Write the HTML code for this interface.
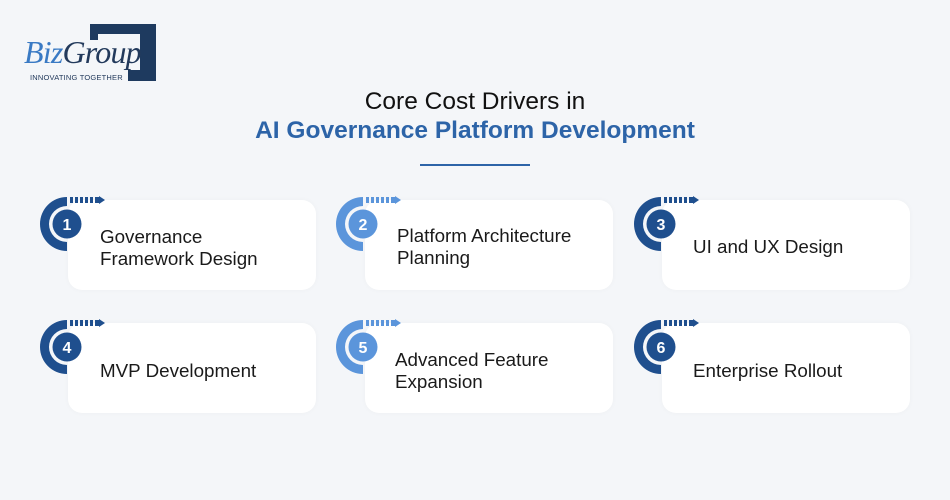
<!DOCTYPE html>
<html><head><meta charset="utf-8"><style>
*{margin:0;padding:0;box-sizing:border-box}
body{width:950px;height:500px;background:#f4f6f9;position:relative;overflow:hidden;font-family:"Liberation Sans",sans-serif}
.card{position:absolute;width:248px;height:90px;background:#fff;border-radius:14px;box-shadow:0 0 6px rgba(0,0,0,0.03)}
.t{position:absolute;font-size:18.8px;line-height:22px;color:#1a1a1a}
svg.b{position:absolute;overflow:visible}
.h1{position:absolute;top:88px;width:950px;text-align:center;font-size:24.5px;color:#111}
.h2{position:absolute;top:117px;width:950px;text-align:center;font-size:24.5px;font-weight:bold;color:#2d64a8}
</style></head><body>
<!-- logo -->
<div style="position:absolute;left:90px;top:24px;width:66px;height:10px;background:#1e3a5f"></div>
<div style="position:absolute;left:90px;top:24px;width:8px;height:16px;background:#1e3a5f"></div>
<div style="position:absolute;left:140px;top:24px;width:16px;height:57px;background:#1e3a5f"></div>
<div style="position:absolute;left:128px;top:70px;width:28px;height:11px;background:#1e3a5f"></div>
<div style="position:absolute;left:24px;top:34px;font-family:'Liberation Serif',serif;font-style:italic;font-size:32px;color:#233a5c;letter-spacing:-0.8px"><span style="color:#3a7ac4">Biz</span>Group</div>
<div style="position:absolute;left:30px;top:73px;font-size:7.5px;color:#233a5c;letter-spacing:0.2px">INNOVATING TOGETHER</div>

<div class="h1">Core Cost Drivers in</div>
<div class="h2">AI Governance Platform Development</div>
<div style="position:absolute;left:420px;top:164px;width:110px;height:2px;background:#2d64a8"></div>

<div class="card" style="left:68px;top:200px"></div>
<div class="card" style="left:365px;top:200px"></div>
<div class="card" style="left:662px;top:200px"></div>
<div class="card" style="left:68px;top:323px"></div>
<div class="card" style="left:365px;top:323px"></div>
<div class="card" style="left:662px;top:323px"></div>

<div class="t" style="left:100px;top:226px">Governance<br>Framework Design</div>
<div class="t" style="left:397px;top:225px">Platform Architecture<br>Planning</div>
<div class="t" style="left:693px;top:236px">UI and UX Design</div>
<div class="t" style="left:100px;top:360px">MVP Development</div>
<div class="t" style="left:395px;top:349px">Advanced Feature<br>Expansion</div>
<div class="t" style="left:693px;top:360px">Enterprise Rollout</div>

<svg width="0" height="0" style="position:absolute">
<defs>
<g id="bd">
<path d="M0,-27 A27,27 0 0 0 0,27 L0,18 A18,18 0 0 1 0,-18 Z"/>
<rect x="3" y="-27" width="3" height="6"/><rect x="8" y="-27" width="3" height="6"/><rect x="13" y="-27" width="3" height="6"/><rect x="18" y="-27" width="3" height="6"/><rect x="23" y="-27" width="3" height="6"/><rect x="28" y="-27" width="4" height="6"/>
<path d="M32,-28 L38,-24 L32,-20 Z"/>
<circle cx="0" cy="0" r="14.5"/>
</g></defs></svg>

<svg class="b" style="left:0;top:0" width="950" height="500">
<g fill="#1f4f8e">
<use href="#bd" transform="translate(67,224)"/>
<use href="#bd" transform="translate(661,224)"/>
<use href="#bd" transform="translate(67,347)"/>
<use href="#bd" transform="translate(661,347)"/>
</g>
<g fill="#5b95db">
<use href="#bd" transform="translate(363,224)"/>
<use href="#bd" transform="translate(363,347)"/>
</g>
<g fill="#fff" font-family="Liberation Sans,sans-serif" font-size="16" font-weight="bold" text-anchor="middle">
<text x="67" y="230">1</text><text x="363" y="230">2</text><text x="661" y="230">3</text>
<text x="67" y="353">4</text><text x="363" y="353">5</text><text x="661" y="353">6</text>
</g>
</svg>
</body></html>
